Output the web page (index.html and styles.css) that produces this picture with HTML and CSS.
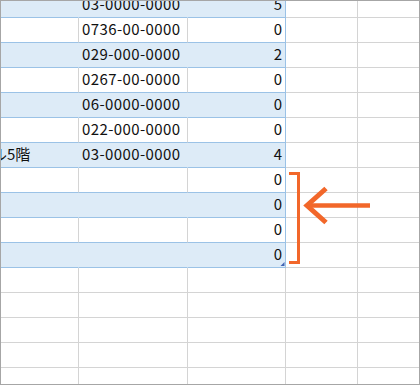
FILE: index.html
```html
<!DOCTYPE html>
<html lang="ja">
<head>
<meta charset="utf-8">
<title>Sheet</title>
<link rel="stylesheet" href="styles.css">
</head>
<body>
<div class="frame">
  <div class="sheet">
    <div class="row band"><div class="c a"></div><div class="c b">03-0000-0000</div><div class="c n">5</div><div class="c d"></div><div class="c e"></div></div>
    <div class="row tbl"><div class="c a"></div><div class="c b">0736-00-0000</div><div class="c n">0</div><div class="c d"></div><div class="c e"></div></div>
    <div class="row band"><div class="c a"></div><div class="c b">029-000-0000</div><div class="c n">2</div><div class="c d"></div><div class="c e"></div></div>
    <div class="row tbl"><div class="c a"></div><div class="c b">0267-00-0000</div><div class="c n">0</div><div class="c d"></div><div class="c e"></div></div>
    <div class="row band"><div class="c a"></div><div class="c b">06-0000-0000</div><div class="c n">0</div><div class="c d"></div><div class="c e"></div></div>
    <div class="row tbl"><div class="c a"></div><div class="c b">022-000-0000</div><div class="c n">0</div><div class="c d"></div><div class="c e"></div></div>
    <div class="row band"><div class="c a"><span class="clip">ビル5階</span></div><div class="c b">03-0000-0000</div><div class="c n">4</div><div class="c d"></div><div class="c e"></div></div>
    <div class="row tbl"><div class="c a"></div><div class="c b"></div><div class="c n">0</div><div class="c d"></div><div class="c e"></div></div>
    <div class="row band"><div class="c a"></div><div class="c b"></div><div class="c n">0</div><div class="c d"></div><div class="c e"></div></div>
    <div class="row tbl"><div class="c a"></div><div class="c b"></div><div class="c n">0</div><div class="c d"></div><div class="c e"></div></div>
    <div class="row band"><div class="c a"></div><div class="c b"></div><div class="c n">0</div><div class="c d"></div><div class="c e"></div></div>
    <div class="row"><div class="c a"></div><div class="c b"></div><div class="c n"></div><div class="c d"></div><div class="c e"></div></div>
    <div class="row"><div class="c a"></div><div class="c b"></div><div class="c n"></div><div class="c d"></div><div class="c e"></div></div>
    <div class="row"><div class="c a"></div><div class="c b"></div><div class="c n"></div><div class="c d"></div><div class="c e"></div></div>
    <div class="row"><div class="c a"></div><div class="c b"></div><div class="c n"></div><div class="c d"></div><div class="c e"></div></div>
    <div class="row"><div class="c a"></div><div class="c b"></div><div class="c n"></div><div class="c d"></div><div class="c e"></div></div>
  </div>
  <svg class="overlay" width="420" height="385" viewBox="0 0 420 385">
    <polygon points="280.5,266 284.5,266 284.5,262" fill="#4164b4"/>
    <path d="M289 173.5 H298.5 V262.5 H289" fill="none" stroke="#f2672a" stroke-width="3" stroke-linejoin="miter"/>
    <path d="M308 205.5 H370" fill="none" stroke="#f2672a" stroke-width="4.5"/>
    <path d="M326 188.5 L307 205.5 L326 222.5" fill="none" stroke="#f2672a" stroke-width="5" stroke-linejoin="miter"/>
  </svg>
</div>
</body>
</html>
```
FILE: styles.css
```css
html, body {
  margin: 0;
  padding: 0;
  background: #ffffff;
}

.frame {
  position: relative;
  width: 420px;
  height: 385px;
  box-sizing: border-box;
  border: 1px solid #a6a6a6;
  overflow: hidden;
  font-family: "Noto Sans CJK JP", "Noto Sans", sans-serif;
  font-size: 15px;
  color: #111111;
}

.sheet {
  margin-top: -8px;
}

.row {
  display: grid;
  grid-template-columns: 78px 109px 98px 72px 72px;
  height: 25px;
}

.c {
  box-sizing: border-box;
  height: 25px;
  border-right: 1px solid #d4d4d4;
  border-bottom: 1px solid #d4d4d4;
  display: flex;
  align-items: flex-end;
  padding: 0 3px 3px 3px;
  line-height: 20px;
  white-space: nowrap;
  overflow: hidden;
}

.b {
  letter-spacing: 0.4px;
}

.n {
  justify-content: flex-end;
}

.tbl .a,
.tbl .b,
.band .a,
.band .b {
  border-bottom-color: #9bc2e6;
}

.tbl .n,
.band .n {
  border-bottom-color: #9bc2e6;
  border-right-color: #9bc2e6;
}

.band .a,
.band .b,
.band .n {
  background: #ddebf7;
}

.band .a,
.band .b {
  border-right-color: #ddebf7;
}

.clip {
  margin-left: -27px;
}

.overlay {
  position: absolute;
  left: -1px;
  top: -1px;
  pointer-events: none;
}
```
